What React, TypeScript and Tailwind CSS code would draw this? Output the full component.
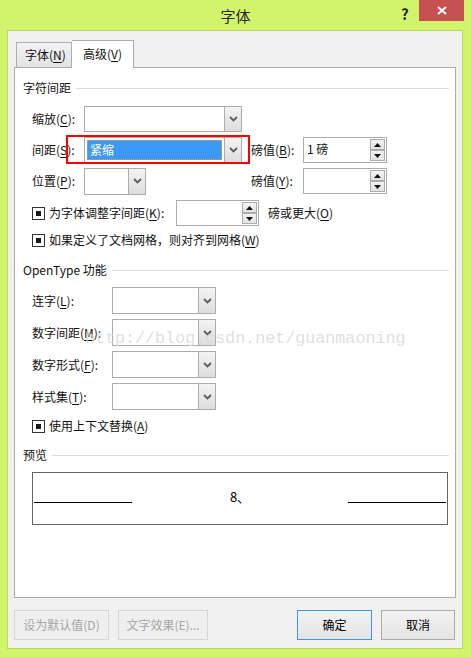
import type { ReactNode } from 'react';

function Key({ children }: { children: ReactNode }) {
  return <span className="underline underline-offset-[2px]">{children}</span>;
}

function Chevron() {
  return (
    <svg width="9" height="6" viewBox="0 0 9 6" className="text-[#5c5c5c]">
      <path d="M1 1l3.5 3.5L8 1" fill="none" stroke="currentColor" strokeWidth="1.8" />
    </svg>
  );
}

function Combo({ className, children }: { className: string; children?: ReactNode }) {
  return (
    <div className={`flex border border-[#acacac] bg-white ${className}`}>
      <div className="flex-1 p-[2px]">{children}</div>
      <div className="flex w-[17px] items-center justify-center border-l border-[#acacac] bg-gradient-to-b from-[#f3f3f3] to-[#dedede]">
        <Chevron />
      </div>
    </div>
  );
}

function SpinButton({ up }: { up?: boolean }) {
  return (
    <div className="flex h-[11px] w-[15px] items-center justify-center border border-[#acacac] bg-gradient-to-b from-[#f3f3f3] to-[#e2e2e2]">
      <svg width="7" height="4" viewBox="0 0 7 4">
        <path d={up ? 'M0 4L3.5 0L7 4Z' : 'M0 0L3.5 4L7 0Z'} fill="#111" />
      </svg>
    </div>
  );
}

function Spin({ className, value }: { className: string; value?: string }) {
  return (
    <div className={`flex border border-[#acacac] bg-white ${className}`}>
      <div className="flex-1 pl-[3px] pt-[3px] text-[12px] leading-[16px]">{value}</div>
      <div className="flex flex-col justify-center gap-0 pr-[1px]">
        <SpinButton up />
        <SpinButton />
      </div>
    </div>
  );
}

function Check() {
  return (
    <span className="flex h-[13px] w-[13px] shrink-0 items-center justify-center border border-[#333] bg-white">
      <span className="h-[5px] w-[5px] bg-[#1a1a1a]" />
    </span>
  );
}

function Header({ children, className }: { children: ReactNode; className: string }) {
  return (
    <div className={`flex h-[16px] items-center gap-[5px] pl-[8px] pr-[6px] ${className}`}>
      <span className="text-[12px] leading-[16px] text-[#111]">{children}</span>
      <div className="h-px flex-1 bg-[#dcdcdc]" />
    </div>
  );
}

function Button({ children, className }: { children: ReactNode; className: string }) {
  return (
    <div className={`flex h-[30px] items-center justify-center border text-[12px] ${className}`}>
      {children}
    </div>
  );
}

export default function App() {
  return (
    <div className="relative h-[657px] w-[471px] overflow-hidden bg-[#d2f36c] font-['Noto_Sans_CJK_SC',sans-serif] text-[12px] text-[#111]">
      <div className="flex h-[30px] items-center justify-center pt-[2px] text-[15px] text-[#2a2a2a]">字体</div>
      <div className="absolute left-[401px] top-[3px] text-[15px] font-bold text-[#222]">?</div>
      <div className="absolute right-[7px] top-0 flex h-[21px] w-[45px] items-center justify-center bg-[#c75050]">
        <svg width="10" height="9" viewBox="0 0 10 9">
          <path d="M1 1l8 7M9 1L1 8" stroke="#fff" strokeWidth="2" />
        </svg>
      </div>

      <div className="ml-[7px] h-[619px] w-[456px] border border-[#b9d95e] bg-[#f0f0f0] pl-[6px]">
        <div className="mt-[9px] flex h-[27px] items-end pl-[2px]">
          <div className="flex h-[25px] w-[56px] items-center border border-b-0 border-[#acacac] bg-gradient-to-b from-[#f2f2f2] to-[#e3e3e3] pl-[8px]">
            字体(<Key>N</Key>)
          </div>
          <div className="relative z-10 mb-[-1px] flex h-[28px] w-[62px] items-center border border-b-0 border-l-0 border-[#acacac] bg-white pb-[2px] pl-[11px]">
            高级(<Key>V</Key>)
          </div>
        </div>

        <div className="relative flex h-[531px] w-[442px] flex-col border border-[#acacac] bg-white">
          <Header className="mt-[12px]">字符间距</Header>

          <div className="ml-[17px] mt-[10px] flex h-[26px] items-center">
            <span className="w-[52px]">缩放(<Key>C</Key>):</span>
            <Combo className="h-[26px] w-[158px]" />
          </div>

          <div className="ml-[17px] mt-[5px] flex h-[26px] items-center">
            <div className="flex w-[219px] items-center">
              <span className="w-[52px]">间距(<Key>S</Key>):</span>
              <div className="relative">
                <Combo className="h-[26px] w-[158px]">
                  <div className="flex h-[20px] items-center border border-dotted border-[#d9a25a] bg-[#3b98f5] pl-[2px] text-white">
                    紧缩
                  </div>
                </Combo>
                <div className="absolute -left-[18px] -right-[8px] -top-[2px] -bottom-[1px] border-2 border-[#ff0000]" />
              </div>
            </div>
            <span className="w-[52px]">磅值(<Key>B</Key>):</span>
            <Spin className="h-[26px] w-[84px]" value="1 磅" />
          </div>

          <div className="ml-[17px] mt-[5px] flex h-[26px] items-center">
            <div className="flex w-[219px] items-center">
              <span className="w-[52px]">位置(<Key>P</Key>):</span>
              <Combo className="h-[27px] w-[62px]" />
            </div>
            <span className="w-[52px]">磅值(<Key>Y</Key>):</span>
            <Spin className="h-[26px] w-[84px]" />
          </div>

          <div className="ml-[17px] mt-[6px] flex h-[26px] items-center">
            <div className="flex w-[144px] items-center gap-[4px]">
              <Check />
              <span>为字体调整字间距(<Key>K</Key>):</span>
            </div>
            <Spin className="h-[26px] w-[83px]" />
            <span className="ml-[9px]">磅或更大(<Key>O</Key>)</span>
          </div>

          <div className="ml-[17px] mt-[6px] flex h-[16px] items-center gap-[4px]">
            <Check />
            <span>如果定义了文档网格，则对齐到网格(<Key>W</Key>)</span>
          </div>

          <Header className="mt-[14px]">OpenType 功能</Header>

          <div className="ml-[17px] mt-[9px] flex h-[27px] items-center">
            <span className="w-[80px]">连字(<Key>L</Key>):</span>
            <Combo className="h-[27px] w-[104px]" />
          </div>
          <div className="ml-[17px] mt-[5px] flex h-[27px] items-center">
            <span className="w-[80px]">数字间距(<Key>M</Key>):</span>
            <Combo className="h-[27px] w-[104px]" />
          </div>
          <div className="ml-[17px] mt-[5px] flex h-[27px] items-center">
            <span className="w-[80px]">数字形式(<Key>F</Key>):</span>
            <Combo className="h-[27px] w-[104px]" />
          </div>
          <div className="ml-[17px] mt-[5px] flex h-[27px] items-center">
            <span className="w-[80px]">样式集(<Key>T</Key>):</span>
            <Combo className="h-[27px] w-[104px]" />
          </div>

          <div className="ml-[17px] mt-[8px] flex h-[16px] items-center gap-[4px]">
            <Check />
            <span>使用上下文替换(<Key>A</Key>)</span>
          </div>

          <Header className="mt-[13px]">预览</Header>

          <div className="ml-[17px] mt-[9px] h-[53px] w-[416px] border border-[#646464] px-[1px] pt-[17px]">
            <div className="flex h-[14px] items-end justify-between">
              <div className="mb-[1px] h-px w-[98px] bg-black" />
              <span className="text-[13px] leading-[14px] text-black">8、</span>
              <div className="mb-[1px] h-px w-[98px] bg-black" />
            </div>
          </div>

          <div className="pointer-events-none absolute left-[70px] top-[261px] z-20 font-['Liberation_Mono',monospace] text-[16.7px] leading-[20px] text-[#d8d8d4]/80">
            http://blog.csdn.net/guanmaoning
          </div>
        </div>

        <div className="mt-[12px] flex pr-[7px]">
          <Button className="w-[95px] border-[#d6d6d6] bg-[#efefef] text-[#a6a6a6]">设为默认值(D)</Button>
          <Button className="ml-[9px] w-[90px] border-[#d6d6d6] bg-[#efefef] text-[#a6a6a6]">文字效果(E)...</Button>
          <Button className="ml-auto w-[75px] border-[#3399ff] bg-gradient-to-b from-[#f2f2f2] to-[#e4e4e4] text-black">确定</Button>
          <Button className="ml-[9px] w-[74px] border-[#acacac] bg-gradient-to-b from-[#f2f2f2] to-[#e4e4e4] text-black">取消</Button>
        </div>
      </div>
    </div>
  );
}
